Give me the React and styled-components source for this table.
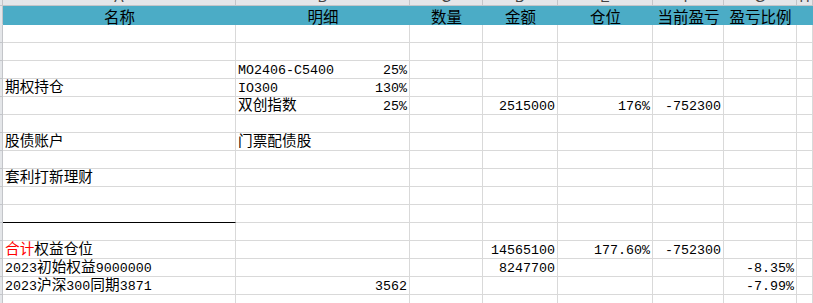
import React from "react";
import styled, { createGlobalStyle } from "styled-components";

const Global = createGlobalStyle`
  html, body { margin: 0; padding: 0; background: #fff; }
  body { width: 813px; height: 303px; overflow: hidden; }
`;

const COLS = "3px 233px 174px 73px 75px 95px 71px 73px 1fr";
const GRID = "#d9d9d9";
const HEAD_BG = "#e4e6e9";
const HEAD_LINE = "#c3c5c9";

const Sheet = styled.div`
  display: flex;
  flex-direction: column;
  width: 813px;
  height: 303px;
  overflow: hidden;
  background: #fff;
`;

const Row = styled.div`
  display: grid;
  grid-template-columns: ${COLS};
  height: ${(p) => p.$h}px;
  flex: none;
`;

const LetterCell = styled.div`
  box-sizing: border-box;
  height: 6px;
  background: ${HEAD_BG};
  border-right: 1px solid ${HEAD_LINE};
  border-bottom: 1px solid ${HEAD_LINE};
  display: flex;
  align-items: flex-end;
  justify-content: center;
  overflow: hidden;
  font-family: "Liberation Sans", Arial, sans-serif;
  font-size: 14px;
  line-height: 14px;
  color: #444;
  span { margin-bottom: 1px; }
`;

const Corner = styled.div`
  box-sizing: border-box;
  background: ${HEAD_BG};
  border-right: 1px solid ${HEAD_LINE};
  border-bottom: 1px solid ${(p) => (p.$noLine ? HEAD_BG : HEAD_LINE)};
`;

const TitleCell = styled.div`
  background: #4bacc6;
  font-family: "Noto Sans CJK SC", sans-serif;
  font-size: 15.5px;
  line-height: 20px;
  color: #000;
  text-align: center;
  white-space: nowrap;
  overflow: hidden;
`;

const Cell = styled.div`
  box-sizing: border-box;
  border-right: 1px solid ${GRID};
  border-bottom: 1px solid ${(p) => (p.$rule ? "#000" : GRID)};
  padding: 0 2px;
  display: flex;
  align-items: flex-end;
  justify-content: ${(p) =>
    p.$align === "right" ? "flex-end" : p.$align === "split" ? "space-between" : "flex-start"};
  font-family: "Liberation Mono", "Noto Sans CJK SC", monospace;
  font-size: 13.33px;
  line-height: 14px;
  color: #000;
  white-space: nowrap;
  overflow: ${(p) => (p.$spill ? "visible" : "hidden")};
`;

const Han = styled.span`
  font-family: "Noto Sans CJK SC", sans-serif;
  font-size: 14.67px;
`;

const Red = styled.span`
  color: #ff0000;
`;

const CJK = /([\u3000-\u9fff\uff00-\uffef]+)/;
const isCJK = (s) => /[\u3000-\u9fff\uff00-\uffef]/.test(s);

function T({ s }) {
  return (
    <>
      {String(s)
        .split(CJK)
        .filter(Boolean)
        .map((part, i) => (isCJK(part) ? <Han key={i}>{part}</Han> : <span key={i}>{part}</span>))}
    </>
  );
}

const LETTERS = ["", "A", "B", "C", "D", "E", "F", "G", "H"];
const TITLES = ["名称", "明细", "数量", "金额", "仓位", "当前盈亏", "盈亏比例", ""];

const ROWS = [
  {},
  {},
  { B: { l: "MO2406-C5400", r: "25%" } },
  { A: "期权持仓", B: { l: "IO300", r: "130%" } },
  { B: { l: "双创指数", r: "25%" }, D: { r: "2515000" }, E: { r: "176%" }, F: { r: "-752300" } },
  {},
  { A: "股债账户", B: "门票配债股" },
  {},
  { A: "套利打新理财" },
  {},
  { ruleA: true },
  {},
  { A: { red: "合计", rest: "权益仓位" }, D: { r: "14565100" }, E: { r: "177.60%" }, F: { r: "-752300" } },
  { A: "2023初始权益9000000", D: { r: "8247700" }, G: { r: "-8.35%" } },
  { A: "2023沪深300同期3871", B: { r: "3562" }, G: { r: "-7.99%" } },
];

function BodyCell({ v, rule }) {
  if (!v) return <Cell $rule={rule} />;
  if (typeof v === "string")
    return (
      <Cell $spill>
        <span>
          <T s={v} />
        </span>
      </Cell>
    );
  if (v.red)
    return (
      <Cell>
        <span>
          <Red>
            <T s={v.red} />
          </Red>
          <T s={v.rest} />
        </span>
      </Cell>
    );
  if (v.l)
    return (
      <Cell $align="split">
        <span>
          <T s={v.l} />
        </span>
        <span>
          <T s={v.r} />
        </span>
      </Cell>
    );
  return (
    <Cell $align="right">
      <span>
        <T s={v.r} />
      </span>
    </Cell>
  );
}

export default function App() {
  const keys = ["A", "B", "C", "D", "E", "F", "G", "H"];
  return (
    <>
      <Global />
      <Sheet>
        <Row $h={6}>
          {LETTERS.map((l, i) => (
            <LetterCell key={i}>
              <span>{l}</span>
            </LetterCell>
          ))}
        </Row>
        <Row $h={19}>
          <Corner $noLine />
          {TITLES.map((t, i) => (
            <TitleCell key={i}>{t}</TitleCell>
          ))}
        </Row>
        {ROWS.map((r, ri) => (
          <Row key={ri} $h={18}>
            <Corner />
            {keys.map((k) => (
              <BodyCell key={k} v={r[k]} rule={k === "A" && r.ruleA} />
            ))}
          </Row>
        ))}
        <Row $h={18}>
          <Corner />
          {keys.map((k) => (
            <Cell key={k} />
          ))}
        </Row>
      </Sheet>
    </>
  );
}
